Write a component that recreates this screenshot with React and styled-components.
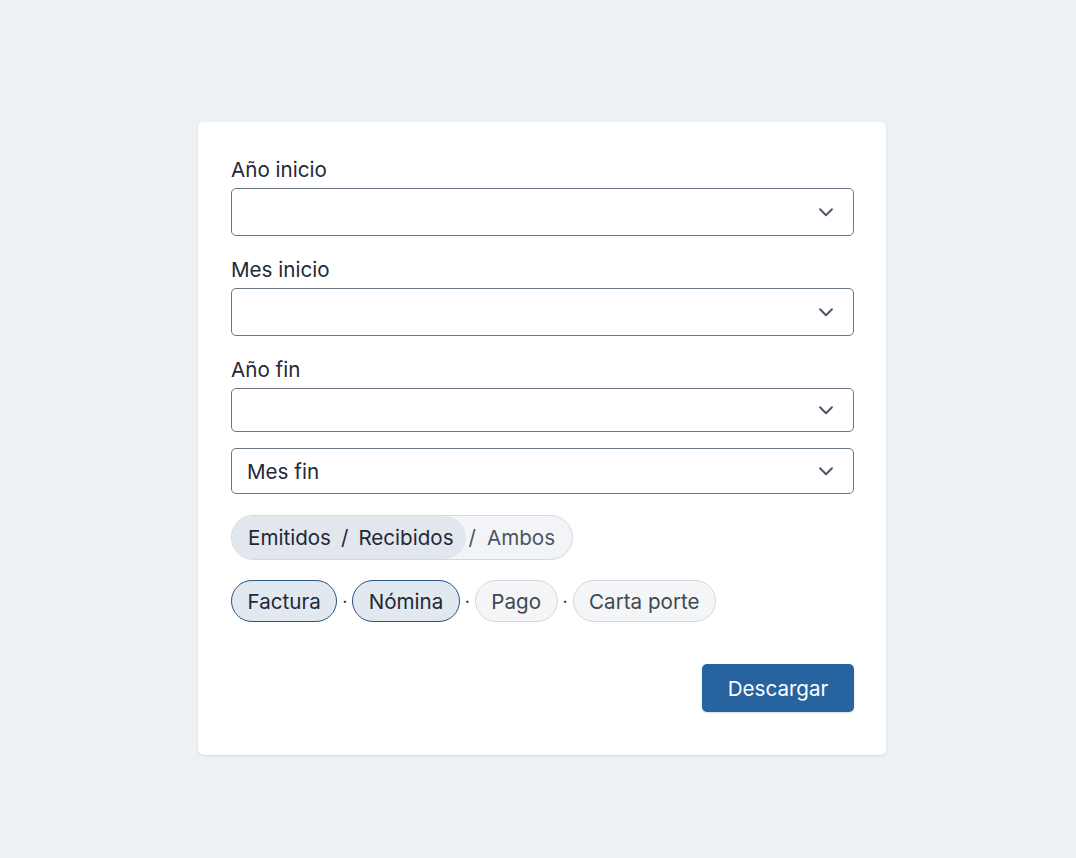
import React from 'react';
import styled, { createGlobalStyle } from 'styled-components';

const GlobalStyle = createGlobalStyle`
  html, body {
    margin: 0;
    padding: 0;
    background: #eef1f4;
    font-family: Inter, "Noto Sans", sans-serif;
  }
`;

const Page = styled.div`
  min-height: 858px;
  display: flex;
  justify-content: center;
  align-items: flex-start;
  padding: 122px 0 0 8px;
  box-sizing: border-box;
`;

const Card = styled.div`
  width: 688px;
  box-sizing: border-box;
  background: #fff;
  border-radius: 6px;
  box-shadow: 0 1px 3px rgba(15, 23, 42, 0.08), 0 1px 2px rgba(15, 23, 42, 0.04);
  padding: 34px 32px 43px 33px;
  display: flex;
  flex-direction: column;
  font-size: 20.6px;
`;

const Label = styled.label`
  display: block;
  font-size: 20.6px;
  line-height: 28px;
  color: #1f2937;
  margin-bottom: 4px;
`;

const Field = styled.div`
  margin-bottom: ${p => p.$gap ?? 20}px;
`;

const SelectBox = styled.div`
  height: ${p => p.$h ?? 48}px;
  box-sizing: border-box;
  border: 1px solid #6b7684;
  border-radius: 5px;
  display: flex;
  align-items: center;
  justify-content: space-between;
  padding: 0 16px 0 15px;
  font-size: 20.6px;
  color: #1f2937;
`;

const Chevron = () => (
  <svg width="22" height="22" viewBox="0 0 24 24" fill="none" stroke="#4b5563" strokeWidth="2.1" strokeLinecap="round" strokeLinejoin="round">
    <path d="M5.5 9l6.5 6.5 6.5-6.5" />
  </svg>
);

const Select = ({ value, h }) => (
  <SelectBox $h={h}>
    <span>{value}</span>
    <Chevron />
  </SelectBox>
);

const Toggle = styled.div`
  align-self: flex-start;
  display: flex;
  align-items: center;
  height: 45px;
  box-sizing: border-box;
  border: 1px solid #d3d8de;
  border-radius: 23px;
  background: #f2f4f7;
  color: #1f2937;
  margin-bottom: 20px;
  overflow: hidden;
`;

const ToggleActive = styled.div`
  height: 100%;
  display: flex;
  align-items: center;
  padding: 0 12px 0 16px;
  background: #e2e7ed;
  border-radius: 23px;
  gap: 10px;
`;

const ToggleRest = styled.div`
  display: flex;
  align-items: center;
  gap: 11px;
  padding: 0 17px 0 3px;
  color: #4b5563;
`;

const Sep = styled.span`
  color: ${p => p.$muted ? '#4b5563' : '#1f2937'};
`;

const ChipRow = styled.div`
  display: flex;
  align-items: center;
  margin-bottom: 42px;
`;

const Chip = styled.div`
  height: 42px;
  box-sizing: border-box;
  display: flex;
  align-items: center;
  padding: 0 15.5px;
  border-radius: 21px;
  border: ${p => p.$on ? '1.5px solid #2b5584' : '1px solid #d3d8de'};
  background: ${p => p.$on ? '#e2e8ef' : '#f3f5f7'};
  color: ${p => p.$on ? '#1f2937' : '#3f4854'};
`;

const Dot = styled.span`
  width: 15px;
  text-align: center;
  font-size: 18px;
  color: #1f2937;
`;

const Footer = styled.div`
  display: flex;
  justify-content: flex-end;
`;

const Button = styled.button`
  height: 48px;
  width: 152px;
  border: none;
  border-radius: 5px;
  background: #26639f;
  color: #fff;
  font-family: inherit;
  font-size: 20.6px;
  box-shadow: 0 1px 2px rgba(15, 23, 42, 0.15);
`;

const types = [
  { name: 'Factura', on: true },
  { name: 'Nómina', on: true },
  { name: 'Pago', on: false },
  { name: 'Carta porte', on: false },
];

export default function App() {
  return (
    <>
      <GlobalStyle />
      <Page>
        <Card>
          <Field>
            <Label>Año inicio</Label>
            <Select />
          </Field>
          <Field>
            <Label>Mes inicio</Label>
            <Select />
          </Field>
          <Field $gap={16}>
            <Label>Año fin</Label>
            <Select h={44} />
          </Field>
          <Field $gap={21}>
            <Select value="Mes fin" h={46} />
          </Field>
          <Toggle>
            <ToggleActive>
              <span>Emitidos</span>
              <Sep>/</Sep>
              <span>Recibidos</span>
            </ToggleActive>
            <ToggleRest>
              <Sep $muted>/</Sep>
              <span>Ambos</span>
            </ToggleRest>
          </Toggle>
          <ChipRow>
            {types.map((t, i) => (
              <React.Fragment key={t.name}>
                {i > 0 && <Dot>·</Dot>}
                <Chip $on={t.on}>{t.name}</Chip>
              </React.Fragment>
            ))}
          </ChipRow>
          <Footer>
            <Button>Descargar</Button>
          </Footer>
        </Card>
      </Page>
    </>
  );
}
